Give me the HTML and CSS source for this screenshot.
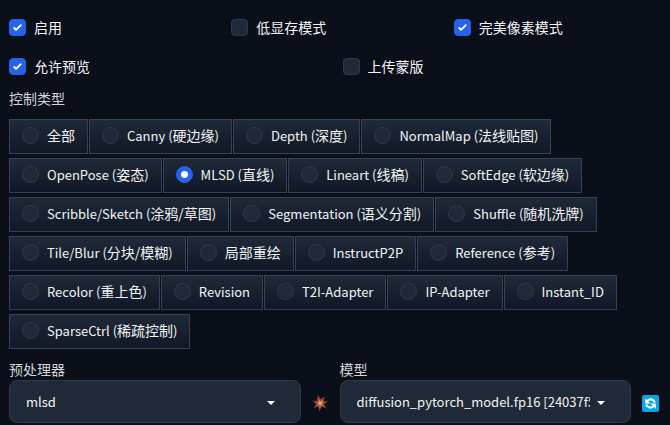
FILE: index.html
```html
<!DOCTYPE html>
<html lang="zh-CN">
<head>
  <meta charset="UTF-8">
  <meta name="viewport" content="width=device-width, initial-scale=1.0">
  <title>ControlNet</title>
  <link rel="stylesheet" href="styles.css">
</head>
<body>
  <main class="panel">
    <div class="check-row three">
      <label class="check"><input type="checkbox" checked><span>启用</span></label>
      <label class="check"><input type="checkbox"><span>低显存模式</span></label>
      <label class="check"><input type="checkbox" checked><span>完美像素模式</span></label>
    </div>
    <div class="check-row two">
      <label class="check"><input type="checkbox" checked><span>允许预览</span></label>
      <label class="check"><input type="checkbox"><span>上传蒙版</span></label>
    </div>

    <fieldset class="control-type">
      <legend class="block-title">控制类型</legend>
      <div class="radio-list">
        <label class="radio"><input type="radio" name="type"><span><span class="zh">全部</span></span></label>
        <label class="radio"><input type="radio" name="type"><span>Canny (<span class="zh">硬边缘</span>)</span></label>
        <label class="radio"><input type="radio" name="type"><span>Depth (<span class="zh">深度</span>)</span></label>
        <label class="radio"><input type="radio" name="type"><span>NormalMap (<span class="zh">法线贴图</span>)</span></label>
        <label class="radio"><input type="radio" name="type"><span>OpenPose (<span class="zh">姿态</span>)</span></label>
        <label class="radio"><input type="radio" name="type" checked><span>MLSD (<span class="zh">直线</span>)</span></label>
        <label class="radio"><input type="radio" name="type"><span>Lineart (<span class="zh">线稿</span>)</span></label>
        <label class="radio"><input type="radio" name="type"><span>SoftEdge (<span class="zh">软边缘</span>)</span></label>
        <label class="radio"><input type="radio" name="type"><span>Scribble/Sketch (<span class="zh">涂鸦/草图</span>)</span></label>
        <label class="radio"><input type="radio" name="type"><span>Segmentation (<span class="zh">语义分割</span>)</span></label>
        <label class="radio"><input type="radio" name="type"><span>Shuffle (<span class="zh">随机洗牌</span>)</span></label>
        <label class="radio"><input type="radio" name="type"><span>Tile/Blur (<span class="zh">分块/模糊</span>)</span></label>
        <label class="radio"><input type="radio" name="type"><span><span class="zh">局部重绘</span></span></label>
        <label class="radio"><input type="radio" name="type"><span>InstructP2P</span></label>
        <label class="radio"><input type="radio" name="type"><span>Reference (<span class="zh">参考</span>)</span></label>
        <label class="radio"><input type="radio" name="type"><span>Recolor (<span class="zh">重上色</span>)</span></label>
        <label class="radio"><input type="radio" name="type"><span>Revision</span></label>
        <label class="radio"><input type="radio" name="type"><span>T2I-Adapter</span></label>
        <label class="radio"><input type="radio" name="type"><span>IP-Adapter</span></label>
        <label class="radio"><input type="radio" name="type"><span>Instant_ID</span></label>
        <label class="radio"><input type="radio" name="type"><span>SparseCtrl (<span class="zh">稀疏控制</span>)</span></label>
      </div>
    </fieldset>

    <div class="model-row">
      <div class="field">
        <label class="block-title" for="preprocessor">预处理器</label>
        <div class="select-wrap">
          <select id="preprocessor"><option>mlsd</option></select>
          <svg class="caret" viewBox="0 0 8 4"><path d="M0 0h8L4 4z"/></svg>
        </div>
      </div>
      <button class="tool" type="button" aria-label="运行预处理器">
        <svg width="16" height="16" viewBox="0 0 16 16">
          <path fill="#8f3b36" d="M6 0l2.500 4L13 1.500 11.500 6l4.500.5-4 2.500 2.500 4.500-4.500-2L7.500 16 6 11.500 1.500 13 4 9 0 5.500l4.500.5z"/>
          <path fill="#c9824c" d="M7.500 4l1.300 2.300L11.500 5l-1 2.500 2 1-2.500.5 1 2.500L9 10.500 7.500 13 7 10l-2.500 1L6 8.500 3.500 7l2.500.2z"/>
          <circle cx="8.200" cy="8" r="1.300" fill="#e2b565"/>
        </svg>
      </button>
      <div class="field">
        <label class="block-title" for="model">模型</label>
        <div class="select-wrap">
          <select id="model"><option>diffusion_pytorch_model.fp16 [24037f53]</option></select>
          <svg class="caret" viewBox="0 0 8 4"><path d="M0 0h8L4 4z"/></svg>
        </div>
      </div>
      <button class="tool" type="button" aria-label="刷新模型">
        <svg width="17" height="17" viewBox="0 0 16 16">
          <rect width="16" height="16" rx="2" fill="#08a5e8"/>
          <path fill="none" stroke="#fff" stroke-width="2" d="M5 5.500Q6.500 3.800 9 4.200q2.300.5 3 2.800M11 10.500Q9.500 12.200 7 11.800 4.700 11.300 4 9"/>
          <path fill="#fff" d="M3 3v5h5zM13 13V8H8z"/>
        </svg>
      </button>
    </div>
  </main>
</body>
</html>
```
FILE: styles.css
```css
* {
  box-sizing: border-box;
}

body {
  margin: 0;
  background: #0b0f19;
  color: #f3f4f6;
  font-family: "Noto Sans CJK SC", sans-serif;
  font-size: 14px;
  line-height: 20px;
}

.panel {
  padding: 17px 0 0 9px;
}

.check-row {
  display: grid;
  gap: 6px;
  margin-bottom: 19px;
}

.three {
  grid-template-columns: repeat(3, 1fr);
}

.two {
  grid-template-columns: repeat(2, 1fr);
  margin-bottom: 12px;
}

.check,
.radio {
  display: flex;
  align-items: center;
  gap: 8px;
  cursor: pointer;
}

input {
  appearance: none;
  flex: none;
  width: 17px;
  height: 17px;
  margin: 0;
  border: 1px solid #303a48;
  background: #1f2937 center / 100% no-repeat;
}

input[type="checkbox"] {
  border-radius: 4px;
}

input[type="radio"] {
  border-radius: 50%;
}

input:checked {
  border-color: #2563eb;
  background-color: #2563eb;
}

input[type="checkbox"]:checked {
  background-image: url("data:image/svg+xml,%3Csvg viewBox='0 0 16 16' fill='white' xmlns='http://www.w3.org/2000/svg'%3E%3Cpath d='M12.207 4.793a1 1 0 010 1.414l-5 5a1 1 0 01-1.414 0l-2-2a1 1 0 011.414-1.414L6.500 9.086l4.293-4.293a1 1 0 011.414 0z'/%3E%3C/svg%3E");
}

input[type="radio"]:checked {
  background-image: radial-gradient(circle, #fff 3px, transparent 4px);
}

.control-type {
  margin: 0;
  padding: 0;
  border: 0;
}

.block-title {
  display: block;
  padding: 0;
  color: #d1d5db;
}

.radio-list {
  display: flex;
  flex-wrap: wrap;
  gap: 4px 1px;
  padding-top: 11px;
}

.radio {
  height: 35px;
  padding: 0 12px 2px;
  border: 1px solid #374151;
  background: linear-gradient(to bottom, #1f2937, #111827);
  font-size: 13px;
}

.zh {
  font-size: 14px;
}

.model-row {
  display: flex;
  align-items: flex-end;
  margin-top: 10px;
}

.field {
  flex: 1;
  min-width: 0;
}

.field .block-title {
  padding-bottom: 1px;
}

.select-wrap {
  position: relative;
}

select {
  appearance: none;
  display: block;
  width: 100%;
  height: 43px;
  padding: 0 40px 0 16px;
  border: 1px solid #303a48;
  border-radius: 8px;
  background: #1f2937;
  color: #f3f4f6;
  font: inherit;
  font-size: 13px;
}

.caret {
  position: absolute;
  top: 21px;
  right: 26px;
  width: 8px;
  height: 4px;
  fill: #fff;
  pointer-events: none;
}

.tool {
  display: flex;
  align-items: center;
  justify-content: center;
  width: 39px;
  height: 40px;
  padding: 0;
  border: 0;
  background: none;
  cursor: pointer;
}
```
